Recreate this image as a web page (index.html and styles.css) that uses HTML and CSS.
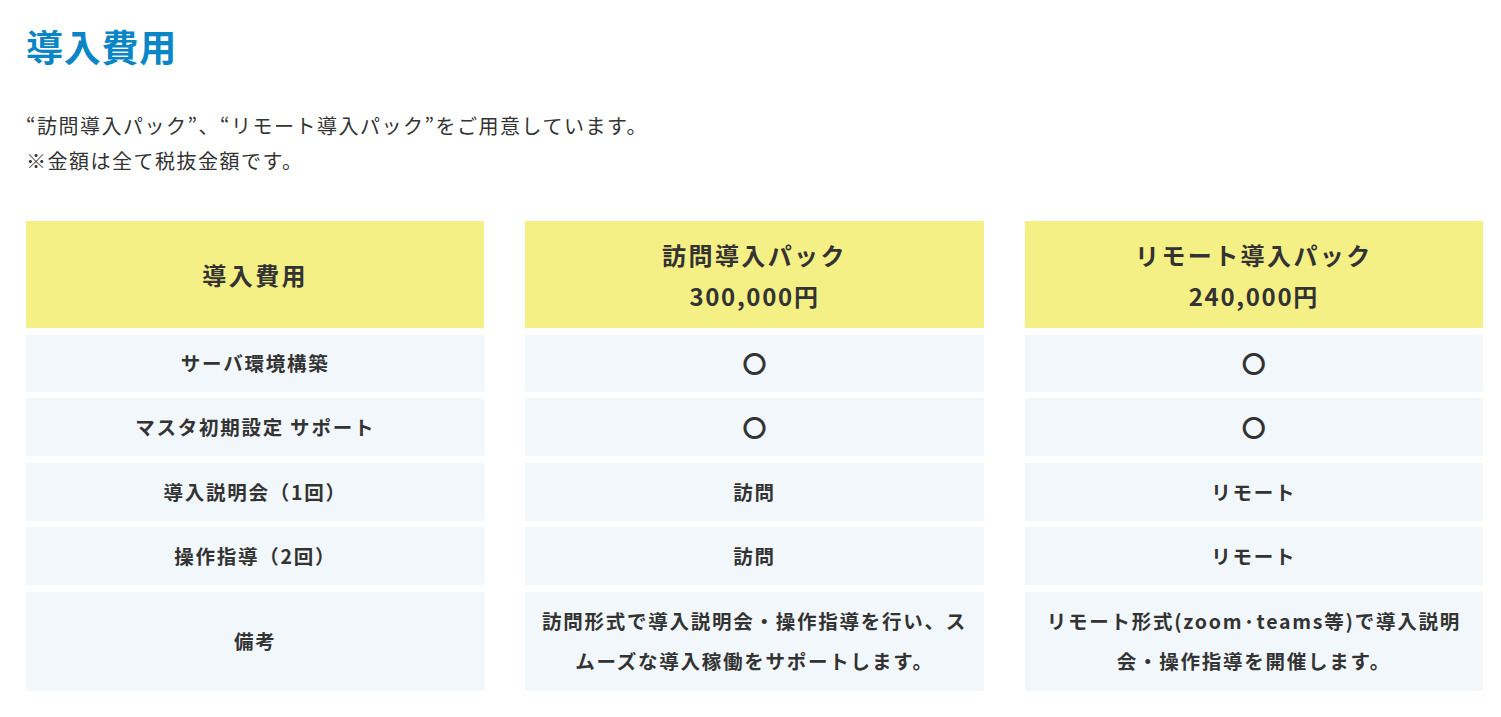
FILE: index.html
```html
<!DOCTYPE html>
<html lang="ja">
<head>
<meta charset="utf-8">
<title>導入費用</title>
<link rel="stylesheet" href="styles.css">
</head>
<body>
<main class="page">
  <h2 class="title">導入費用</h2>
  <div class="intro">
    <p>“訪問導入パック”、“リモート導入パック”をご用意しています。</p>
    <p>※金額は全て税抜金額です。</p>
  </div>
  <div class="price-table">
    <div class="cell head"><p class="txt">導入費用</p></div>
    <div class="cell head"><p class="txt">訪問導入パック<br><span class="price">300,000円</span></p></div>
    <div class="cell head"><p class="txt">リモート導入パック<br><span class="price">240,000円</span></p></div>

    <div class="cell"><p class="txt">サーバ環境構築</p></div>
    <div class="cell"><p class="txt mark">〇</p></div>
    <div class="cell"><p class="txt mark">〇</p></div>

    <div class="cell"><p class="txt">マスタ初期設定 サポート</p></div>
    <div class="cell"><p class="txt mark">〇</p></div>
    <div class="cell"><p class="txt mark">〇</p></div>

    <div class="cell"><p class="txt">導入説明会（1回）</p></div>
    <div class="cell"><p class="txt">訪問</p></div>
    <div class="cell"><p class="txt">リモート</p></div>

    <div class="cell"><p class="txt">操作指導（2回）</p></div>
    <div class="cell"><p class="txt">訪問</p></div>
    <div class="cell"><p class="txt">リモート</p></div>

    <div class="cell"><p class="txt">備考</p></div>
    <div class="cell"><p class="txt">訪問形式で導入説明会・操作指導を行い、スムーズな導入稼働をサポートします。</p></div>
    <div class="cell"><p class="txt">リモート形式(zoom·teams等)で導入説明会・操作指導を開催します。</p></div>
  </div>
</main>
</body>
</html>
```
FILE: styles.css
```css
html, body {
  margin: 0;
  padding: 0;
  background: #ffffff;
}

body {
  font-family: "Noto Sans CJK JP", "Noto Sans", sans-serif;
  color: #333333;
}

.page {
  padding: 19px 18px 0 26px;
}

.title {
  margin: 0;
  font-size: 37px;
  line-height: 54px;
  font-weight: 700;
  color: #0a85c5;
  letter-spacing: 0.02em;
}

.intro {
  margin-top: 35px;
}

.intro p {
  margin: 0;
  font-size: 20px;
  line-height: 35px;
  letter-spacing: 0.075em;
}

.price-table {
  margin-top: 43px;
  display: grid;
  grid-template-columns: repeat(3, 1fr);
  grid-template-rows: 107px 57px 58px 58px 58px 99px;
  column-gap: 41px;
  row-gap: 6.6px;
}

.cell {
  display: flex;
  align-items: center;
  justify-content: center;
  text-align: center;
  background: #f2f7fb;
  font-size: 19.5px;
  font-weight: 700;
  line-height: 40px;
  letter-spacing: 0.09em;
  padding: 0 14px;
}

.txt {
  margin: 0;
}

.cell.head {
  background: #f5f085;
  font-size: 24px;
  line-height: 41px;
  letter-spacing: 0.1em;
}

.price {
  letter-spacing: 0.07em;
}

.mark {
  font-size: 24px;
  font-weight: 700;
  letter-spacing: 0;
}
```
